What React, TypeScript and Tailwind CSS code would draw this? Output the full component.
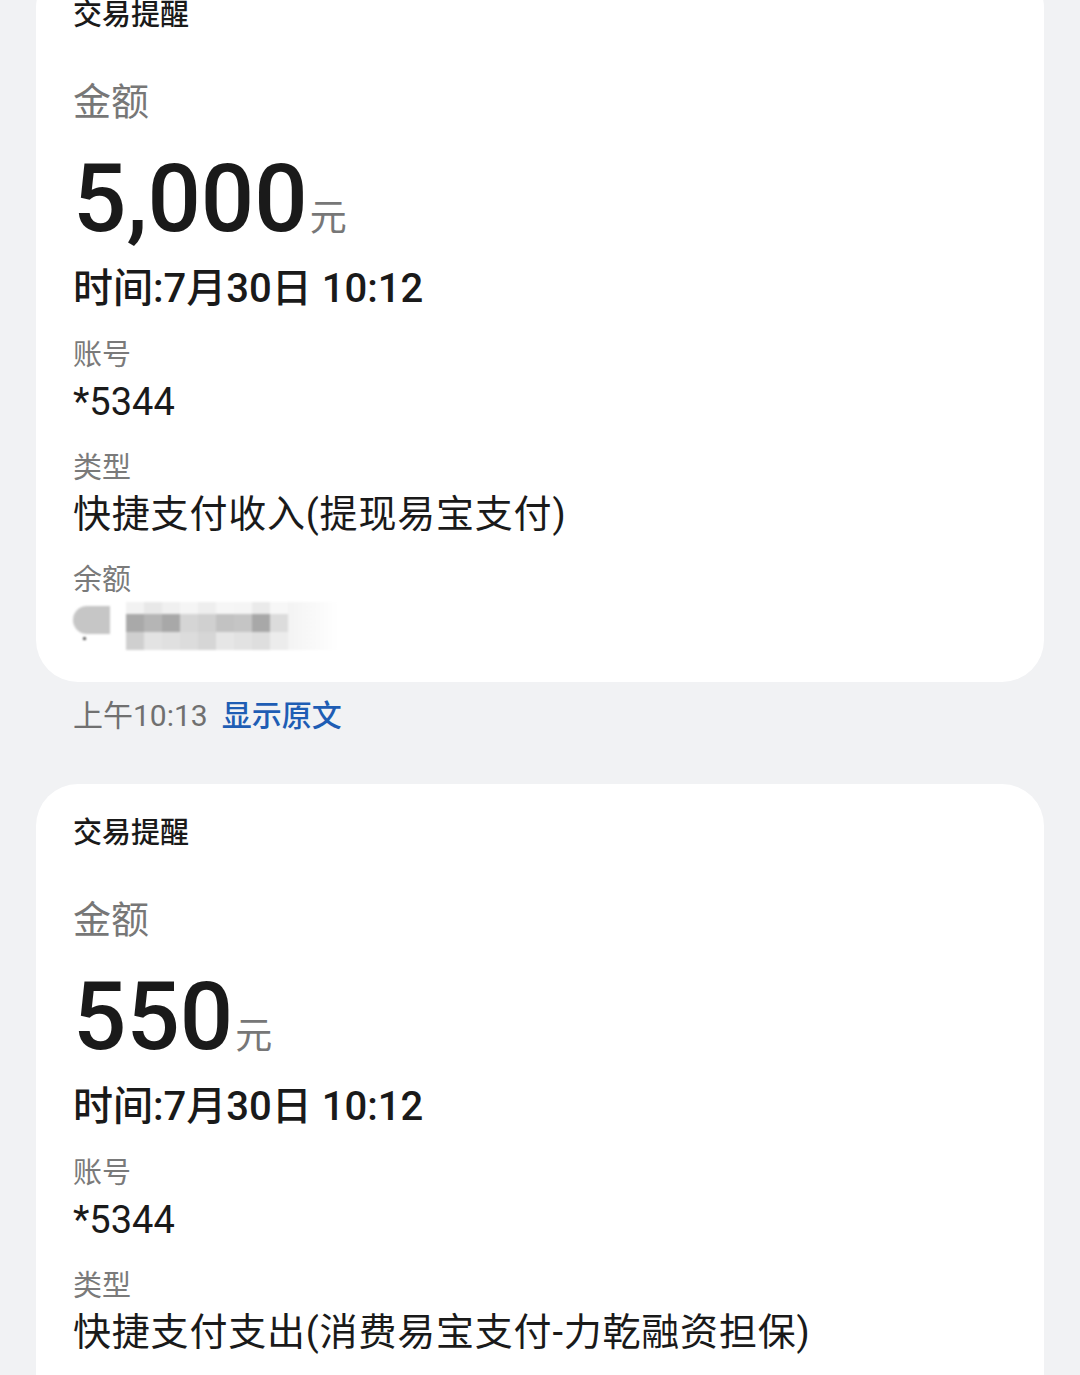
import { FC } from "react";

type Notice = {
  amount: string;
  time: string;
  account: string;
  type: string;
  showBalance: boolean;
};

const font = "font-['Roboto','Noto_Sans_CJK_SC',sans-serif]";

const mosaicTop = ["#f2f2f2", "#e8e8e8", "#f0f0f0", "#f5f5f5", "#eeeeee", "#f6f6f6", "#f5f5f5", "#eaeaea", "#f7f7f7"];
const mosaicMid = ["#a9a9a9", "#b5b5b5", "#a8a8a8", "#d5d5d5", "#d0d0d0", "#c2c2c2", "#c5c5c5", "#a8a8a8", "#dcdcdc"];
const mosaicBottom = ["#cfcfcf", "#e3e3e3", "#e0e0e0", "#dcdcdc", "#d6d6d6", "#e6e6e6", "#e2e2e2", "#dedede", "#ececec"];

// blurred-out balance, drawn as a pixel mosaic
const BlurredBalance: FC = () => {
  return (
    <div className="flex h-[48px] items-stretch blur-[1px]">
      <div className="flex w-[53px] flex-col">
        <div className="mt-[4px] h-[28px] w-[37px] rounded-l-full bg-[#c6c6c6]" />
        <div className="ml-[10px] mt-[3px] h-[3px] w-[3px] rounded-full bg-[#333]" />
      </div>
      <div className="flex flex-col">
        <div className="flex h-[12px]">
          {mosaicTop.map((c, i) => (
            <div key={i} className="w-[18px]" style={{ backgroundColor: c }} />
          ))}
        </div>
        <div className="flex h-[18px]">
          {mosaicMid.map((c, i) => (
            <div key={i} className="w-[18px]" style={{ backgroundColor: c }} />
          ))}
        </div>
        <div className="flex h-[18px]">
          {mosaicBottom.map((c, i) => (
            <div key={i} className="w-[18px]" style={{ backgroundColor: c }} />
          ))}
        </div>
      </div>
      <div className="w-[50px] bg-gradient-to-r from-[#f3f3f3] to-white" />
    </div>
  );
};

const NoticeCard: FC<{ obj: Notice }> = (props) => {
  const { obj } = props;

  return (
    <div className="rounded-[42px] bg-white pl-[37px] pr-[37px] pt-[29px] pb-[32px]">
      <p className="text-[29px] leading-[40px] font-medium text-[#1a1a1a]">交易提醒</p>
      <p className="mt-[42px] text-[38px] leading-[50px] text-[#777]">金额</p>
      <div className="mt-[22px] flex h-[100px] items-baseline gap-[2px]">
        <span className="text-[94px] leading-[100px] font-medium text-[#1a1a1a]">{obj.amount}</span>
        <span className="text-[37px] leading-[40px] text-[#777]">元</span>
      </div>
      <p className="mt-[15px] text-[40px] leading-[50px] font-medium text-[#1a1a1a]">{obj.time}</p>
      <p className="mt-[21px] text-[29px] leading-[40px] text-[#7a7a7a]">账号</p>
      <p className="mt-[2px] text-[38px] leading-[50px] text-[#1a1a1a]">{obj.account}</p>
      <p className="mt-[21px] text-[29px] leading-[40px] text-[#7a7a7a]">类型</p>
      <p className="mt-[1px] text-[38px] leading-[50px] tracking-[0.8px] text-[#1a1a1a]">{obj.type}</p>
      {obj.showBalance && (
        <>
          <p className="mt-[21px] text-[29px] leading-[40px] text-[#7a7a7a]">余额</p>
          <div className="mt-[2px]">
            <BlurredBalance />
          </div>
        </>
      )}
    </div>
  );
};

const App: FC = () => {
  const notices: Notice[] = [
    {
      amount: "5,000",
      time: "时间:7月30日 10:12",
      account: "*5344",
      type: "快捷支付收入(提现易宝支付)",
      showBalance: true,
    },
    {
      amount: "550",
      time: "时间:7月30日 10:12",
      account: "*5344",
      type: "快捷支付支出(消费易宝支付-力乾融资担保)",
      showBalance: true,
    },
  ];

  return (
    <div className={`${font} h-[1375px] overflow-hidden bg-[#f1f2f4] px-[36px]`}>
      <div className="-mt-[34px]">
        <NoticeCard obj={notices[0]} />
        <p className="mt-[14px] pl-[37px] text-[30px] leading-[40px] text-[#707070]">
          上午10:13<span className="ml-[14px] font-medium text-[#1e5db4]">显示原文</span>
        </p>
        <div className="mt-[48px]">
          <NoticeCard obj={notices[1]} />
        </div>
      </div>
    </div>
  );
};

export default App;
